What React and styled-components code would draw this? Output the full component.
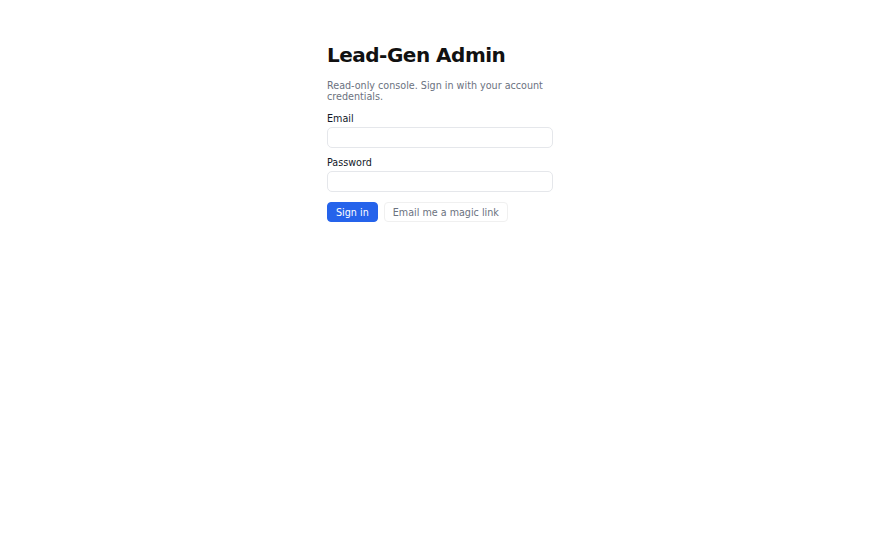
import React from 'react'
import styled, { createGlobalStyle } from 'styled-components'

const GlobalStyle = createGlobalStyle`
  * {
    box-sizing: border-box;
  }

  body {
    margin: 0;
    background: #fff;
    color: #111827;
    font-family: 'DejaVu Sans', sans-serif;
  }
`

const Page = styled.main`
  width: 226px;
  margin: 0 auto;
  padding-top: 43px;
`

const Title = styled.h1`
  margin: 0 0 14px;
  font-size: 20px;
  font-weight: bold;
  line-height: 24px;
  letter-spacing: -0.5px;
  color: #111111;
`

const Lead = styled.p`
  margin: 0 0 11px;
  font-size: 9.6px;
  line-height: 1.1;
  color: #6b7280;
`

const Form = styled.form`
  display: flex;
  flex-direction: column;
`

const Field = styled.label`
  display: flex;
  flex-direction: column;
  gap: 2px;
  margin-bottom: 9px;
  font-size: 9.6px;
  line-height: 12px;
  color: #111827;

  & + & {
    margin-bottom: 10px;
  }
`

const Input = styled.input`
  height: 21px;
  padding: 0 8px;
  border: 1px solid #e5e7eb;
  border-radius: 5px;
  font: inherit;
  background: #fff;
`

const Actions = styled.div`
  display: flex;
  gap: 6px;
`

const Button = styled.button`
  height: 20px;
  padding: 0 8px;
  border: 1px solid ${(p) => (p.$primary ? '#2563eb' : '#f0f0f0')};
  border-radius: 4px;
  background: ${(p) => (p.$primary ? '#2563eb' : '#fff')};
  color: ${(p) => (p.$primary ? '#fff' : '#6b7280')};
  font-family: 'DejaVu Sans', sans-serif;
  font-size: 9.6px;
  cursor: pointer;
`

export default function App() {
  return (
    <>
      <GlobalStyle />
      <Page>
        <Title>Lead-Gen Admin</Title>
        <Lead>Read-only console. Sign in with your account credentials.</Lead>
        <Form onSubmit={(e) => e.preventDefault()}>
          <Field>
            Email
            <Input type="email" />
          </Field>
          <Field>
            Password
            <Input type="password" />
          </Field>
          <Actions>
            <Button type="submit" $primary>
              Sign in
            </Button>
            <Button type="button">Email me a magic link</Button>
          </Actions>
        </Form>
      </Page>
    </>
  )
}
